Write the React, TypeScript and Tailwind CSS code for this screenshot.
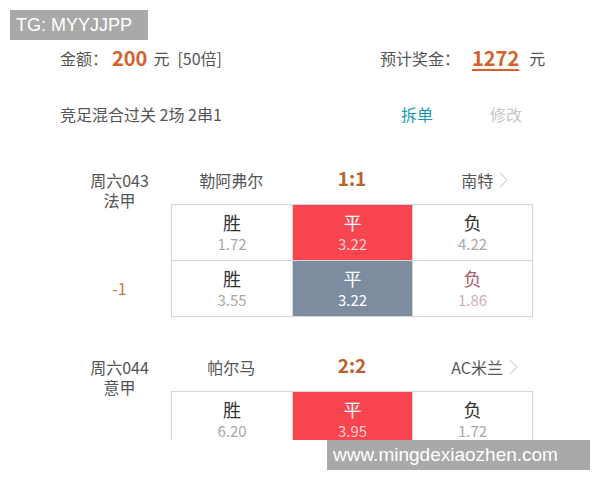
import React from "react";

const font = { fontFamily: '"Noto Sans CJK SC", "Noto Sans", sans-serif' };

type Cell = { label: string; odds: string; kind?: "red" | "gray" | "mauve" };

function OddsCell({ c }: { c: Cell }) {
  const bg =
    c.kind === "red" ? "bg-[#f94550]" : c.kind === "gray" ? "bg-[#7d8d9f]" : "bg-white";
  const lc =
    c.kind === "red" || c.kind === "gray"
      ? "text-white"
      : c.kind === "mauve"
      ? "text-[#a8606e]"
      : "text-[#333]";
  const oc =
    c.kind === "red"
      ? "text-[#fdd2d2]"
      : c.kind === "gray"
      ? "text-white"
      : c.kind === "mauve"
      ? "text-[#cdb0b8]"
      : "text-[#a8a8a8]";
  return (
    <div className={`flex flex-col items-center justify-center h-[55px] ${bg}`}>
      <div className={`text-[18px] leading-[22px] ${lc}`}>{c.label}</div>
      <div className={`text-[15px] leading-[22px] ${oc}`}>{c.odds}</div>
    </div>
  );
}

function Chevron() {
  return (
    <svg width="9" height="16" viewBox="0 0 9 16" className="ml-[6px]">
      <path d="M1 1 L8 8 L1 15" fill="none" stroke="#d6d6d6" strokeWidth="1.2" />
    </svg>
  );
}

function Match({
  day,
  league,
  home,
  score,
  away,
  rows,
  handicap,
}: {
  day: string;
  league: string;
  home: string;
  score: string;
  away: string;
  rows: Cell[][];
  handicap?: string;
}) {
  return (
    <div className="flex pl-[68px]">
      <div className="w-[103px] flex flex-col">
        <div className="h-[48px] flex flex-col items-center pt-[14px] text-[16px] leading-[20px] text-[#555]">
          <div>{day}</div>
          <div>{league}</div>
        </div>
        <div className="h-[56px]" />
        {handicap && (
          <div className="h-[56px] flex items-center justify-center text-[16px] text-[#c27a3e]">
            {handicap}
          </div>
        )}
      </div>
      <div className="w-[362px] flex flex-col">
        <div className="h-[48px] grid grid-cols-3 items-center">
          <div className="text-center text-[16px] text-[#555]">{home}</div>
          <div className="text-center text-[19px] font-bold text-[#b9622e] -mt-[4px]">{score}</div>
          <div className="flex items-center justify-center pl-[24px] text-[16px] text-[#555]">
            {away}
            <Chevron />
          </div>
        </div>
        <div className="border border-[#d4d4d4] flex flex-col">
          {rows.map((r, i) => (
            <div
              key={i}
              className={`grid grid-cols-3 ${i > 0 ? "border-t border-[#d4d4d4]" : ""}`}
            >
              {r.map((c, j) => (
                <div key={j} className={j > 0 ? "border-l border-[#d4d4d4]" : ""}>
                  <OddsCell c={c} />
                </div>
              ))}
            </div>
          ))}
        </div>
      </div>
    </div>
  );
}

export default function App() {
  return (
    <div className="relative w-[600px] h-[480px] bg-white overflow-hidden" style={font}>
      <div className="h-[440px] overflow-hidden">
        <div className="h-[42px]" />
        <div className="flex items-center pl-[60px] h-[32px] text-[16px] text-[#555]">
          <div className="w-[320px] flex items-center">
            <span>金额：</span>
            <span className="text-[20px] font-bold text-[#d3612b] ml-[4px] mr-[6px]">200</span>
            <span>元</span>
            <span className="ml-[8px]">[50倍]</span>
          </div>
          <div className="flex items-center">
            <span>预计奖金：</span>
            <span className="text-[20px] font-bold text-[#d3612b] ml-[12px] mr-[10px] underline underline-offset-[3px] decoration-[2px]">
              1272
            </span>
            <span>元</span>
          </div>
        </div>
        <div className="h-[24px]" />
        <div className="flex items-center pl-[60px] h-[32px] text-[16px] text-[#555]">
          <div className="w-[341px]">竞足混合过关 2场 2串1</div>
          <div className="text-[#1b9bb1] w-[89px]">拆单</div>
          <div className="text-[#c8c8c8]">修改</div>
        </div>
        <div className="h-[26px]" />
        <Match
          day="周六043"
          league="法甲"
          home="勒阿弗尔"
          score="1:1"
          away="南特"
          handicap="-1"
          rows={[
            [
              { label: "胜", odds: "1.72" },
              { label: "平", odds: "3.22", kind: "red" },
              { label: "负", odds: "4.22" },
            ],
            [
              { label: "胜", odds: "3.55" },
              { label: "平", odds: "3.22", kind: "gray" },
              { label: "负", odds: "1.86", kind: "mauve" },
            ],
          ]}
        />
        <div className="h-[26px]" />
        <Match
          day="周六044"
          league="意甲"
          home="帕尔马"
          score="2:2"
          away="AC米兰"
          rows={[
            [
              { label: "胜", odds: "6.20" },
              { label: "平", odds: "3.95", kind: "red" },
              { label: "负", odds: "1.72" },
            ],
          ]}
        />
      </div>
      <div
        className="absolute left-[10px] top-[10px] w-[138px] h-[30px] bg-[#a9a9a9] text-white text-[18px] leading-[30px] pl-[6px]"
        style={{ fontFamily: '"Liberation Sans", Arial, sans-serif' }}
      >
        TG: MYYJJPP
      </div>
      <div
        className="absolute left-[327px] top-[440px] w-[263px] h-[30px] bg-[#a9a9a9] text-white text-[19px] leading-[30px] pl-[6px]"
        style={{ fontFamily: '"Liberation Sans", Arial, sans-serif' }}
      >
        www.mingdexiaozhen.com
      </div>
    </div>
  );
}
